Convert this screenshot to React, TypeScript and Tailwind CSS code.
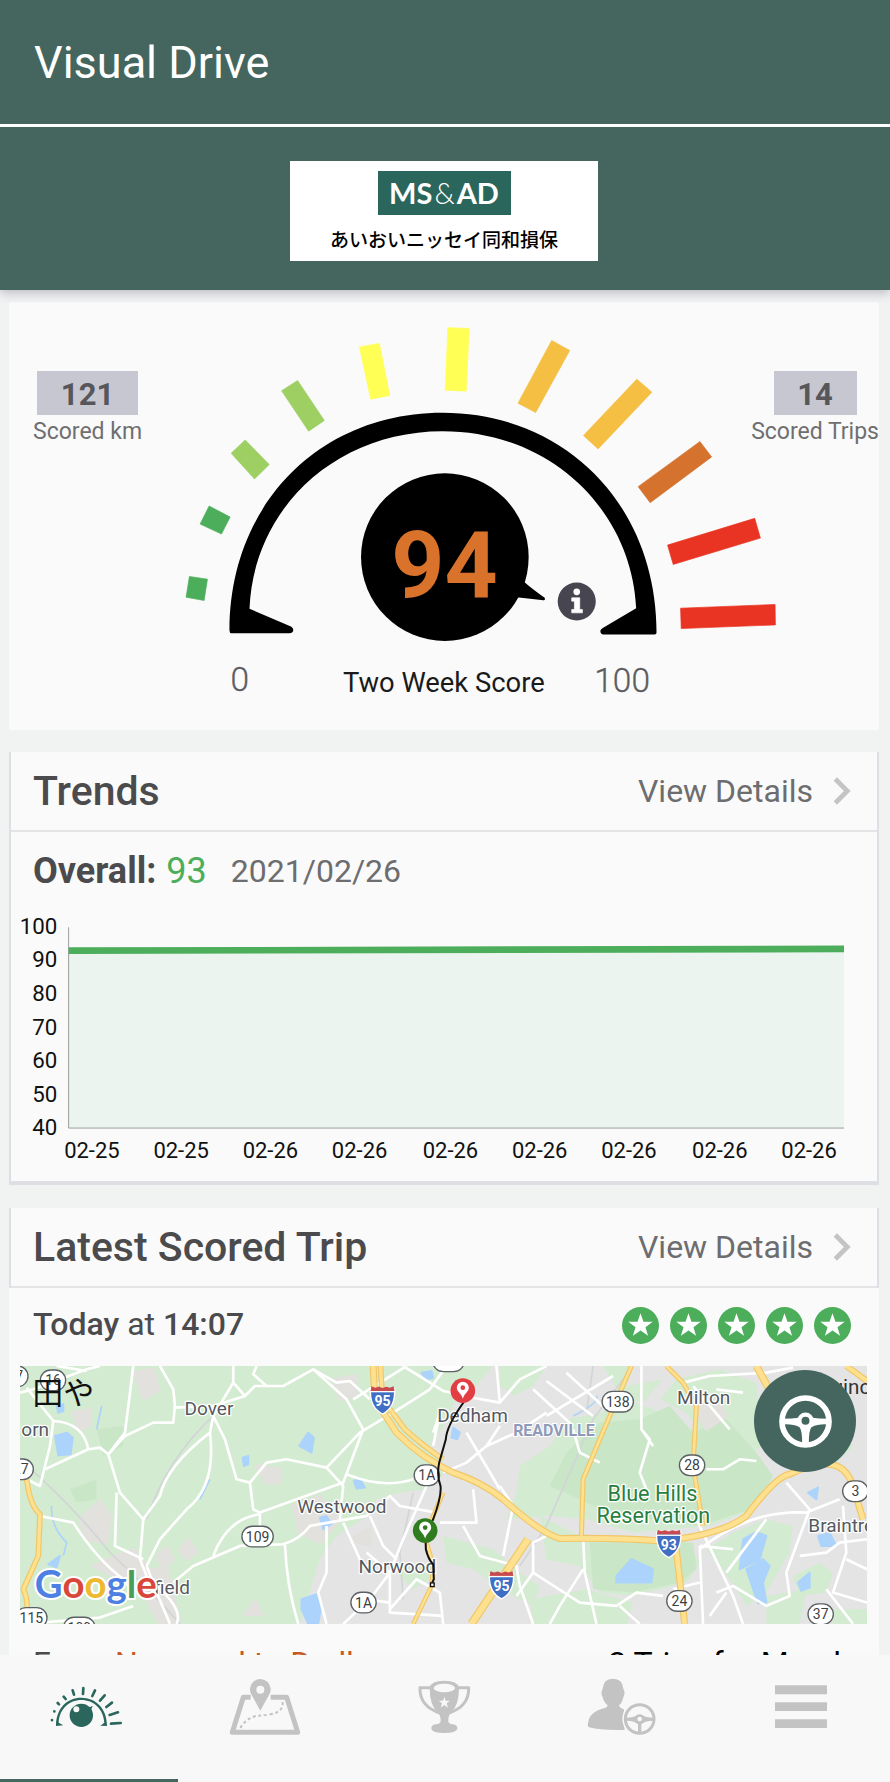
import React from "react";

const JP = "font-['Noto_Sans_CJK_JP',sans-serif]";

/* ---------- Gauge ---------- */

const gaugeBars: { points: string; fill: string }[] = [
  { points: "568,858 622,866 612,930 558,920", fill: "#4cad5b" },
  { points: "627,647 690,680 664,731 600,701", fill: "#4cad5b" },
  { points: "735,449 807,523 763,566 693,489", fill: "#9dcf62" },
  { points: "892,271 972,391 925,423 844,302", fill: "#9dcf62" },
  { points: "1077,171 1137,160 1168,316 1111,327", fill: "#ffff55" },
  { points: "1342,113 1406,115 1397,303 1334,300", fill: "#ffff55" },
  { points: "1653,151 1707,181 1605,367 1552,339", fill: "#f4bf42" },
  { points: "1908,267 1953,306 1792,476 1748,436", fill: "#f4bf42" },
  { points: "2097,454 2132,500 1948,637 1912,589", fill: "#d5722e" },
  { points: "2261,684 2278,743 2017,822 2000,764", fill: "#e93323" },
  { points: "2039,953 2322,942 2323,1003 2041,1014", fill: "#e93323" },
];

function Gauge() {
  return (
    <svg viewBox="426 36 1824 1281" className="block w-full overflow-visible font-[Roboto,sans-serif]" role="img" aria-label="Two Week Score 94">
      {gaugeBars.map((b) => (
        <polygon key={b.points} points={b.points} fill={b.fill} stroke={b.fill} strokeWidth="2" strokeLinejoin="round" />
      ))}
      <path
        d="M688 1020 C688 640 960 368 1326 368 C1700 368 1967 650 1967 1026 Q1967 1032 1961 1032 L1808 1032 Q1798 1030 1799 1020 Q1800 1015 1806 1012 L1906 953 C1892 660 1650 423 1326 423 C1010 423 760 650 748 955 L872 1008 Q880 1012 879 1020 Q877 1028 868 1028 L694 1028 Q688 1028 688 1020 Z"
        fill="#000"
      />
      <circle cx="1333" cy="800" r="251" fill="#000" />
      <path d="M1570 874 Q1595 896 1632 922 Q1635 930 1628 929 L1548 920 Z" fill="#000" />
      <text x="1332" y="919" textAnchor="middle" fontSize="278" fontWeight="700" fill="#d9722b">94</text>
      <circle cx="1728" cy="933" r="57" fill="#464550" />
      <circle cx="1728" cy="904" r="10" fill="#fff" />
      <path d="M1713 922 H1737 V957 H1745 V967 H1713 V957 H1721 V932 H1713 Z" fill="#fff" stroke="#fff" strokeWidth="2" />
      <text x="719" y="1202" textAnchor="middle" fontSize="100" fontWeight="300" fill="#5c5c60" stroke="#5c5c60">0</text>
      <text x="1330" y="1203" textAnchor="middle" fontSize="82" fill="#1a1a1a">Two Week Score</text>
      <text x="1864" y="1205" textAnchor="middle" fontSize="100" fontWeight="300" fill="#5c5c60" stroke="#5c5c60">100</text>
    </svg>
  );
}

function Stat({ value, label, wide }: { value: string; label: string; wide?: boolean }) {
  return (
    <div className="mt-[69px] flex flex-col items-center whitespace-nowrap">
      <span
        className={
          "flex h-11 items-center justify-center bg-[#c7c7d1] pt-1 text-[31px] font-bold text-[#57575b] " +
          (wide ? "w-[101px]" : "w-[83px]")
        }
      >
        {value}
      </span>
      <span className="text-[23px] leading-[34px] text-[#6f6f71]">{label}</span>
    </div>
  );
}

/* ---------- Trends chart ---------- */

const yTicks = [100, 90, 80, 70, 60, 50, 40];
const xTicks: { x: number; label: string }[] = [
  { x: 276, label: "02-25" },
  { x: 544, label: "02-25" },
  { x: 812, label: "02-26" },
  { x: 1080, label: "02-26" },
  { x: 1353, label: "02-26" },
  { x: 1621, label: "02-26" },
  { x: 1889, label: "02-26" },
  { x: 2162, label: "02-26" },
  { x: 2430, label: "02-26" },
];

function TrendChart() {
  return (
    <svg viewBox="33 540 2601 800" className="block w-full font-[Roboto,sans-serif]" role="img" aria-label="Overall score by date">
      <polygon points="206,662 2535,657 2535,1195 206,1195" fill="#ebf4ef" />
      <path d="M206 592 V1195 H2535" fill="none" stroke="#9a9f9d" strokeWidth="3" />
      <path d="M206 662 L2535 657" stroke="#4cad5b" strokeWidth="20" />
      {yTicks.map((t, i) => (
        <text key={t} x="172" y={611 + i * 101} textAnchor="end" fontSize="67" fill="#111">
          {t}
        </text>
      ))}
      {xTicks.map((t) => (
        <text key={t.x} x={t.x} y="1286" textAnchor="middle" fontSize="66" fill="#111">
          {t.label}
        </text>
      ))}
    </svg>
  );
}

/* ---------- Map ---------- */

function Shield({ x, y, n }: { x: number; y: number; n: string }) {
  return (
    <g transform={`translate(${x} ${y})`}>
      <path d="M-36 -34 L36 -34 Q40 22 0 42 Q-40 22 -36 -34 Z" fill="#3f6fc4" stroke="#fff" strokeWidth="4" />
      <path d="M-33 -41 L-22 -37 L-11 -40 L0 -36 L11 -40 L22 -37 L33 -41 L36 -27 L-36 -27 Z" fill="#c94a4e" />
      <path d="M-37 -25 H37" stroke="#fff" strokeWidth="4" />
      <text y="18" textAnchor="middle" fontSize="42" fontWeight="700" fill="#fff">{n}</text>
    </g>
  );
}

function Route({ x, y, n }: { x: number; y: number; n: string }) {
  const w = n.length > 2 ? 94 : 76;
  return (
    <g transform={`translate(${x} ${y})`}>
      <rect x={-w / 2} y="-31" width={w} height="62" rx="31" fill="#fff" stroke="#5b6064" strokeWidth="4" />
      <text y="15" textAnchor="middle" fontSize="42" fill="#3c4043">{n}</text>
    </g>
  );
}

function Place({ x, y, name }: { x: number; y: number; name: string }) {
  return (
    <text x={x} y={y} fontSize="57" fill="#55595e" stroke="#fff" strokeWidth="8" strokeLinejoin="round" paintOrder="stroke">
      {name}
    </text>
  );
}

function Pin({ x, y, fill }: { x: number; y: number; fill: string }) {
  return (
    <g transform={`translate(${x} ${y})`}>
      <circle r="37" fill={fill} />
      <path d="M0 24 C-4 8 -18 3 -18 -9 A18 18 0 0 1 18 -9 C18 3 4 8 0 24 Z" fill="#fff" />
      <circle cy="-9" r="7" fill={fill} />
    </g>
  );
}

const greens = [
  "M60 500 H1480 L1430 560 L1370 600 L1330 680 L1290 740 L1340 820 L1280 870 L1200 880 L1130 900 L1090 960 L1010 1010 L960 1080 L900 1274 H60 Z",
  "M1500 500 H1640 L1600 560 L1540 590 L1500 560 Z",
  "M1810 500 L1900 500 L1880 560 L1990 540 L1930 610 L1870 600 Z",
  "M1980 600 L2030 540 L2160 510 L2270 550 L2280 650 L2320 720 L2240 770 L2100 700 L2060 640 Z",
  "M1560 800 L1650 740 L1700 660 L1810 640 L1850 590 L1960 630 L2060 690 L2150 680 L2240 780 L2320 840 L2260 930 L2130 980 L1900 1000 L1760 960 L1640 950 L1520 960 L1550 880 Z",
  "M1620 950 L1760 1020 L1860 1030 L2060 1020 L2100 1090 L2060 1150 L1900 1190 L1800 1180 L1740 1100 L1640 1080 Z",
  "M1330 1010 L1480 1050 L1560 1120 L1620 1160 L1600 1220 L1520 1180 L1420 1110 L1340 1090 Z",
  "M2120 1050 L2200 1000 L2300 960 L2380 980 L2370 1060 L2300 1180 L2240 1220 L2190 1140 Z",
  "M2380 1130 L2460 1090 L2500 1120 L2480 1180 L2400 1190 Z",
  "M2440 700 L2520 690 L2560 740 L2510 790 Z",
  "M1590 1200 L1760 1170 L1900 1210 L1880 1274 H1600 Z",
  "M2300 1190 L2420 1170 L2400 1274 H2300 Z",
  "M2490 1230 H2602 V1274 H2500 Z",
  "M1190 1120 L1260 1090 L1300 1130 L1240 1170 Z",
];

const darkGreens = [
  "M1650 860 L1700 760 L1800 670 L1920 660 L2010 620 L2080 700 L2180 660 L2270 760 L2320 830 L2250 930 L2100 980 L1960 960 L1860 960 L1760 910 Z",
  "M1770 1030 H2080 L2090 1110 L2040 1150 L1900 1180 L1780 1170 Z",
  "M290 690 L370 680 L370 740 L310 770 Z",
  "M210 870 L290 840 L290 900 L230 910 Z",
];

const patches = [
  "M405 520 L460 510 L475 570 L430 600 Z",
  "M1000 540 L1070 530 L1070 590 L1020 600 Z",
  "M220 640 L270 630 L270 680 L235 690 Z",
  "M240 960 L300 905 L330 950 L320 1030 L260 1020 Z",
  "M770 800 L840 810 L840 850 L800 850 Z",
  "M470 1070 L500 1045 L520 1080 L490 1110 Z",
  "M540 1050 L565 1020 L590 1060 L560 1080 Z",
  "M735 1245 L765 1205 L785 1245 Z",
  "M880 920 L960 890 L1020 960 L960 1030 L900 1000 Z",
  "M400 1110 L500 1110 L540 1274 H480 L440 1200 Z",
  "M1050 1020 L1110 990 L1110 1040 Z",
  "M280 1100 L400 1050 L440 1100 L360 1140 Z",
  "M2080 620 L2150 590 L2180 650 L2120 690 Z",
];

const waters = [
  "M165 710 L200 700 L218 715 L212 765 L175 768 Z",
  "M898 740 L925 700 L942 715 L935 760 Z",
  "M728 775 L745 770 L745 795 L732 800 Z",
  "M1062 845 L1080 838 L1095 865 L1070 868 Z",
  "M960 955 L980 950 L995 975 L970 990 Z",
  "M905 1200 L950 1185 L965 1215 L955 1274 L925 1274 L905 1230 Z",
  "M145 1095 L180 1070 L170 1105 Z",
  "M170 620 L190 615 L190 635 L175 640 Z",
  "M1265 520 L1295 515 L1300 535 L1280 540 Z",
  "M1360 685 L1380 700 L1372 720 L1355 715 Z",
  "M1850 1130 L1895 1080 L1960 1110 L1955 1150 L1850 1150 Z",
  "M2230 1020 L2270 998 L2300 1010 L2280 1080 L2220 1110 Z",
  "M2240 1110 L2290 1080 L2310 1100 L2290 1150 L2300 1210 L2275 1212 L2250 1140 Z",
  "M2395 1150 L2430 1120 L2430 1165 L2405 1175 Z",
  "M2455 1010 L2490 1000 L2510 1040 L2465 1040 Z",
  "M2425 880 L2455 865 L2450 900 Z",
];

const whiteRoads = [
  "M80 565 L160 665 L150 740 L135 800 L120 860 L60 830",
  "M160 665 Q250 670 265 750 L135 810",
  "M400 500 L375 700 L325 765 L360 880 L430 960 L420 1080 L440 1130",
  "M265 750 L300 745 L325 765 L375 710 L460 670 L520 670 L525 620 L520 570 L480 500",
  "M520 625 L640 620 L735 590 L765 560 L850 560 L940 510 L1010 550 L1050 545 L1110 600",
  "M700 500 L700 550 L735 590 M770 500 L760 525 L800 560",
  "M700 550 L640 650 L630 700 Q500 800 480 890 L430 960",
  "M640 650 L675 720 L710 840 L750 850 L800 790 L860 780 L980 805 L1080 700 L1180 640 L1290 570 L1340 500",
  "M630 700 Q650 860 560 930 L480 1020 L440 1100",
  "M750 850 L760 930 L780 940 L1030 850 L1090 690 L1040 600 L940 510",
  "M350 880 L345 1040 L430 1080",
  "M120 950 L220 970 Q290 1080 370 1140 L400 1180",
  "M440 1100 L470 1180 L510 1274 M470 1160 Q550 1230 530 1274",
  "M520 1150 L580 1100 L720 1040 L850 1035 Q900 1020 930 980 L1100 950 L1170 890 L1200 920 L1310 940",
  "M640 1070 Q680 960 780 945 V1000",
  "M855 1035 Q860 1160 895 1274",
  "M980 980 V1120 L955 1180 L980 1274",
  "M1030 970 L1080 1080 M1110 950 L1150 1040 L1190 1080",
  "M1040 825 Q1150 870 1240 840 M980 805 L1030 860 L1020 960",
  "M1280 860 L1210 1020 L1170 1120 L1170 1240 L1330 1250",
  "M1100 1060 L1170 1120 L1110 1200 L1030 1274 M1100 1200 L1170 1210 M1170 1230 L1250 1140 L1320 1180 L1330 1274",
  "M1060 600 L1220 500 M1210 500 L1330 575 L1400 590",
  "M1390 590 L1500 610 L1560 540 L1640 500 M1490 500 L1500 610",
  "M1640 545 L1780 650 M1600 570 L1720 680 M1640 650 L1840 530 M1700 520 L1820 630",
  "M1330 820 L1400 790 L1460 740 L1550 700 L1640 640 M1400 700 L1500 870 M1460 740 L1500 680",
  "M1320 970 L1430 970 L1420 870 M1500 860 L1540 920 L1510 1070",
  "M1390 980 L1440 1070 L1550 1100 L1560 1160 L1600 1274",
  "M1640 1010 L1600 1030 L1600 1120 L1550 1190 M1600 1120 L1740 1210 L1850 1220 L1910 1180 L1990 1190",
  "M1750 1010 L1755 1120 L1790 1274 M1750 1110 L1680 1220 L1650 1274 M1860 1220 L1920 1274",
  "M1925 500 V690 L1950 720 L1920 820 L1940 870 M1925 690 L1960 740",
  "M2050 550 L2130 530 L2300 520 L2380 505 M2080 560 L2190 690 M2230 580 L2150 570",
  "M2120 810 L2170 810 L2220 780 L2270 785",
  "M2090 960 L2200 1190 L2230 1274 M2100 1040 L2110 1274 M2100 1040 L2200 1050",
  "M2150 1180 L2200 1160 L2300 1220 L2370 1190 L2360 1120 L2430 930 L2360 850",
  "M2100 1050 Q2250 930 2420 940 L2520 900 M2180 1120 L2300 960",
  "M2400 1070 L2480 1060 L2520 1030 L2602 1020 M2530 920 L2540 1060 L2500 1180 L2602 1210",
  "M2540 1080 L2602 1110 M2480 1170 L2560 1274 M2020 1170 L2100 1150",
  "M2130 1250 L2180 1180 M1300 740 L1320 640 L1300 700",
  "M1800 790 L1740 760 L1720 690",
  "M80 1274 L300 1255 L400 1220",
  "M60 580 L100 570 L260 510 L300 500 M170 500 L260 515",
];

const yellowRoads: { d: string; w: number }[] = [
  { d: "M80 840 Q90 920 120 945 L115 1070 L70 1170 Q90 1210 75 1274", w: 12 },
  { d: "M1895 500 L1800 720 L1750 840 L1745 1010", w: 10 },
  { d: "M2000 500 L2050 550 L2090 620 L2080 800 L2110 980", w: 10 },
  { d: "M2270 500 L2320 590", w: 18 },
  { d: "M2540 500 L2602 545", w: 14 },
  { d: "M2490 795 Q2540 800 2560 860 L2590 960", w: 16 },
  { d: "M1330 880 L1275 1010 L1300 1100 L1295 1160 L1240 1274", w: 9 },
  { d: "M1585 1020 L1415 1274", w: 20 },
  { d: "M2025 1010 L2055 1274", w: 16 },
  { d: "M1120 500 L1125 600 L1190 700 Q1270 780 1360 820 Q1450 850 1510 900 Q1620 1000 1680 1018 Q1860 1015 1980 1025 Q2160 1010 2240 950 Q2330 830 2370 825 Q2440 790 2490 795", w: 16 },
  { d: "M1142 500 L1148 600 L1215 690 Q1270 740 1330 780", w: 12 },
];

function TripMap() {
  return (
    <svg viewBox="60 500 2542 774" className="block w-full font-[Roboto,sans-serif]" role="img" aria-label="Trip route from Norwood to Dedham">
      <rect x="60" y="500" width="2542" height="774" fill="#e5e4e5" />
      {greens.map((d) => <path key={d} d={d} fill="#d3ebd0" />)}
      {darkGreens.map((d) => <path key={d} d={d} fill="#c9e6c7" />)}
      {patches.map((d) => <path key={d} d={d} fill="#e2e1dd" stroke="#e2e1dd" strokeWidth="10" strokeLinejoin="round" />)}
      {waters.map((d) => <path key={d} d={d} fill="#abd3fb" stroke="#abd3fb" strokeWidth="6" strokeLinejoin="round" />)}
      <g fill="none" strokeLinejoin="round">
        <path d="M305 620 L290 690 M155 920 Q150 980 200 1030 L190 1070 M630 840 L600 900 M1720 650 Q1800 610 1790 590" stroke="#abd3fb" strokeWidth="5" />
        <path d="M60 780 Q220 920 330 1060 Q430 1150 540 1274 M640 650 Q500 780 440 960 M1240 880 L1200 1060 L1210 1200 M1900 500 L1780 660 L1640 980 L1560 1100 M1780 500 L1760 640" stroke="#d2d5d6" strokeWidth="5" />
        {whiteRoads.map((d) => <path key={d} d={d} stroke="#fff" strokeWidth="8" />)}
        {yellowRoads.map((r) => <path key={r.d} d={r.d} stroke="#f1c668" strokeWidth={r.w + 5} />)}
        {yellowRoads.map((r) => <path key={r.d} d={r.d} stroke="#fde18f" strokeWidth={r.w - 2} />)}
      </g>

      <Route x={46} y={531} n="27" />
      <Route x={159} y={543} n="16" />
      <Route x={62} y={810} n="27" />
      <Route x={94} y={1256} n="115" />
      <Route x={238} y={1285} n="109" />
      <Route x={773} y={1012} n="109" />
      <Route x={1091} y={1210} n="1A" />
      <Route x={1281} y={828} n="1A" />
      <Route x={1346} y={486} n="109" />
      <Route x={1854} y={607} n="138" />
      <Route x={2077} y={798} n="28" />
      <Route x={2039} y={1205} n="24" />
      <Route x={2567} y={876} n="3" />
      <Route x={2463} y={1245} n="37" />
      <Shield x={1148} y={602} n="95" />
      <Shield x={1505} y={1157} n="95" />
      <Shield x={2007} y={1033} n="93" />

      <Place x={554} y={646} name="Dover" />
      <Place x={64} y={710} name="orn" />
      <Place x={892} y={940} name="Westwood" />
      <Place x={1076} y={1121} name="Norwood" />
      <Place x={1312} y={667} name="Dedham" />
      <Place x={2032} y={614} name="Milton" />
      <Place x={2426} y={998} name="Braintree" />
      <Place x={462} y={1185} name="field" />
      <text x="2496" y="584" fontSize="62" fill="#333">uincy</text>
      <text x="1540" y="710" fontSize="48" fontWeight="700" fill="#8d9bb8" stroke="#fff" strokeWidth="6" paintOrder="stroke">READVILLE</text>
      <g fontSize="65" fill="#2a7f3f" stroke="#fff" strokeWidth="8" strokeLinejoin="round" paintOrder="stroke" textAnchor="middle">
        <text x="1958" y="905">Blue Hills</text>
        <text x="1961" y="970">Reservation</text>
      </g>

      <path d="M1392 608 Q1340 680 1338 720 L1318 790 Q1310 830 1322 860 Q1326 890 1300 960 L1277 1000 L1278 1050 Q1285 1080 1300 1095 L1302 1140 L1297 1150" fill="none" stroke="#111" strokeWidth="6" />
      <rect x="1292" y="1151" width="11" height="11" fill="#fff" stroke="#111" strokeWidth="4" />
      <Pin x={1389} y={574} fill="#e23f44" />
      <Pin x={1276} y={994} fill="#2f7d1f" />

      <text x="104" y="1195" fontSize="115" fontWeight="700" stroke="#fff" strokeWidth="12" strokeLinejoin="round" paintOrder="stroke" className="font-[Lato,sans-serif]">
        <tspan fill="#4e80e4">G</tspan><tspan fill="#d9473a">o</tspan><tspan fill="#efb92f">o</tspan><tspan fill="#4e80e4">g</tspan><tspan fill="#4a9d58">l</tspan><tspan fill="#d9473a">e</tspan>
      </text>
      <text x="97" y="615" fontSize="93" fill="#111" className="font-['Noto_Sans_CJK_JP',sans-serif]">田や</text>
    </svg>
  );
}

/* ---------- Icons ---------- */

function StarBadge() {
  return (
    <svg viewBox="0 0 112 112" className="size-[37px]" aria-hidden="true">
      <circle cx="56" cy="56" r="56" fill="#4cad5b" />
      <path d="M56 19 L65 45 L93 45 L71 61 L79 87 L56 71 L33 87 L41 61 L19 45 L47 45 Z" fill="#fff" />
    </svg>
  );
}

function Chevron() {
  return (
    <svg viewBox="0 0 54 84" className="h-[28px] w-[18px]" aria-hidden="true">
      <path d="M7 6 L43 42 L7 78" fill="none" stroke="#c4c4c4" strokeWidth="14" />
    </svg>
  );
}

function WheelIcon() {
  return (
    <svg viewBox="0 0 160 160" className="size-[53px]" fill="none" stroke="#fff" aria-hidden="true">
      <circle cx="80" cy="80" r="71" strokeWidth="17" />
      <path d="M12 72 Q40 72 60 69 L100 69 Q120 72 148 72 L148 89 Q118 87 98 97 Q90 105 90 148 L70 148 Q70 105 62 97 Q42 87 12 89 Z" fill="#fff" stroke="none" />
      <circle cx="80" cy="78" r="25" fill="#fff" stroke="none" />
      <circle cx="80" cy="78" r="12" fill="#44665f" stroke="none" />
    </svg>
  );
}

const iconClass = "h-[60px] w-20";

function EyeIcon() {
  return (
    <svg viewBox="147 105 240 180" className={iconClass} aria-hidden="true">
      <g fill="none" stroke="#2a665b" strokeWidth="8" strokeLinecap="round">
        <path d="M156 240 v.5 M163 214 v.5 M173 189 l4 4 M191 170 l6 7 M218 151 l4 13 M250 144 l-1 18 M285 151 l-8 17 M314 166 l-14 16 M336 188 l-17 13 M354 217 l-25 8 M362 249 l-29 2" />
      </g>
      <path d="M168 258 C168 205 201 173 244 173 C288 173 321 206 321 258 L301 257 L313 248 C310 207 281 180 244 180 C208 180 178 207 176 248 L190 256 Z" fill="#2a665b" />
      <circle cx="244" cy="226" r="35" fill="#2a665b" />
      <path d="M266 203 L278 197 L273 211 Z" fill="#2a665b" />
      <circle cx="229" cy="208" r="9" fill="#f8f8f8" />
    </svg>
  );
}

function MapIcon() {
  return (
    <svg viewBox="681 105 240 180" className={iconClass} aria-hidden="true">
      <path d="M752 172 H730 L697 277 H893 L860 172 H812" fill="none" stroke="#c3c3c3" strokeWidth="15" strokeLinejoin="round" />
      <path d="M781 212 L755 165 A31 31 0 1 1 807 165 Z" fill="#c3c3c3" />
      <circle cx="781" cy="149" r="12" fill="#f8f8f8" />
      <path d="M848 186 Q850 215 815 222 Q790 227 770 227 Q735 237 720 266" fill="none" stroke="#c3c3c3" strokeWidth="6" strokeDasharray="9 8" />
    </svg>
  );
}

function TrophyIcon() {
  return (
    <svg viewBox="1215 105 240 180" className={iconClass} aria-hidden="true">
      <path d="M1294 143 L1260 143 Q1258 200 1322 220 M1372 143 L1406 143 Q1408 200 1344 220" fill="none" stroke="#c3c3c3" strokeWidth="9" strokeLinejoin="round" />
      <path d="M1289 143 Q1293 122 1333 122 Q1373 122 1377 143 Q1377 195 1354 216 Q1344 226 1345 245 Q1349 253 1361 253 Q1373 257 1372 266 Q1368 279 1333 279 Q1298 279 1294 266 Q1293 257 1305 253 Q1317 253 1322 245 Q1323 226 1312 216 Q1289 195 1289 143 Z" fill="#c3c3c3" />
      <ellipse cx="1333" cy="144" rx="32" ry="13" fill="#f8f8f8" />
      <path d="M1333 170 L1337 182 L1350 182 L1340 190 L1344 203 L1333 195 L1322 203 L1326 190 L1316 182 L1329 182 Z" fill="#f8f8f8" />
    </svg>
  );
}

function DriverIcon() {
  return (
    <svg viewBox="429 105 240 180" className={iconClass} aria-hidden="true">
      <path d="M519 116 Q548 116 550 146 Q557 158 550 172 Q546 190 537 196 Q538 204 552 208 Q548 240 554 270 Q485 272 447 262 Q442 260 444 250 Q448 215 492 205 Q502 203 503 196 Q492 188 488 172 Q481 158 488 146 Q490 116 519 116 Z" fill="#c3c3c3" />
      <circle cx="599" cy="237" r="52" fill="#f8f8f8" />
      <circle cx="599" cy="237" r="43" fill="none" stroke="#c3c3c3" strokeWidth="9" />
      <path d="M558 233 Q582 233 590 226 H608 Q616 233 640 233 V242 Q612 243 604 253 V278 H594 V253 Q586 243 558 242 Z" fill="#c3c3c3" />
      <circle cx="599" cy="237" r="14" fill="#c3c3c3" />
      <circle cx="599" cy="237" r="7" fill="#f8f8f8" />
    </svg>
  );
}

function MenuIcon() {
  return (
    <svg viewBox="963 105 240 180" className={iconClass} aria-hidden="true">
      <path d="M1005 136 h156 v27 h-156 Z M1005 187 h156 v26 h-156 Z M1005 238 h156 v26 h-156 Z" fill="#c3c3c3" />
    </svg>
  );
}

/* ---------- Page ---------- */

function CardHeader({ title }: { title: string }) {
  return (
    <div className="flex h-20 items-center justify-between border-b-2 border-[#e4e4e6] pr-[26px] pl-[22px]">
      <h2 className="pt-0.5 text-[41px] font-medium text-[#4b4b4d]">{title}</h2>
      <a href="#details" className="flex items-center gap-5 text-[32px] text-[#6d6d6f]">
        View Details
        <Chevron />
      </a>
    </div>
  );
}

const tabs = [
  { label: "Home", icon: <EyeIcon /> },
  { label: "Trips", icon: <MapIcon /> },
  { label: "Rewards", icon: <TrophyIcon /> },
  { label: "Driver", icon: <DriverIcon /> },
  { label: "Menu", icon: <MenuIcon /> },
];

export default function App() {
  return (
    <div className="flex h-screen flex-col bg-[#f1f3f3] font-[Roboto,sans-serif]">
      <header className="relative shrink-0 bg-[#44665f] shadow-[0_3px_10px_rgba(60,60,80,0.3)]">
        <h1 className="flex h-[127px] items-center border-b-3 border-white px-[34px] pt-0.5 text-[45px] text-white">Visual Drive</h1>
        <div className="flex h-[163px] items-center justify-center pt-1 pr-0.5">
          <div className="flex h-[100px] w-[308px] flex-col items-center bg-white pt-2.5">
            <span className="flex h-11 w-[133px] items-center justify-center gap-0.5 bg-[#2a665b] text-[29px] font-bold text-white font-[Lato,sans-serif]">
              MS<span className="font-light">&amp;</span>AD
            </span>
            <span className={`${JP} pt-2.5 text-[19px] leading-7 font-medium whitespace-nowrap text-black`}>あいおいニッセイ同和損保</span>
          </div>
        </div>
      </header>

      <main className="min-h-0 flex-1 overflow-y-auto pr-[11px] pl-[9px] [scrollbar-width:none]">
        <section className="mt-3 mb-[22px] grid grid-cols-[auto_1fr_auto] bg-[#fafafa] pl-6">
          <Stat value="121" label="Scored km" wide />
          <Gauge />
          <Stat value="14" label="Scored Trips" />
        </section>

        <section className="mb-[23px] border-x-2 border-b-4 border-[#dedfe4] bg-[#fafafa]">
          <CardHeader title="Trends" />
          <div className="flex h-[78px] items-center pl-[22px] text-[#6d6d6f]">
            <span className="text-4xl font-bold text-[#4b4b4d]">Overall:</span>
            <span className="pl-2.5 text-4xl text-[#4cad5b]">93</span>
            <span className="pl-6 text-[32px]">2021/02/26</span>
          </div>
          <TrendChart />
          <div className="h-[5px]" />
        </section>

        <section className="bg-[#fafafa]">
          <div className="border-x-2 border-[#dedfe4]">
            <CardHeader title="Latest Scored Trip" />
          </div>
          <div className="flex h-[78px] items-center justify-between pr-7 pb-1 pl-6">
            <p className="pb-0.5 text-[32px] text-[#4b4b4d]">
              <span className="font-medium">Today</span> at <span className="font-medium">14:07</span>
            </p>
            <div className="flex gap-[11px]" role="img" aria-label="5 stars">
              <StarBadge />
              <StarBadge />
              <StarBadge />
              <StarBadge />
              <StarBadge />
            </div>
          </div>
          <div className="relative mr-3 ml-[11px]">
            <TripMap />
            <button
              type="button"
              aria-label="Start driving"
              className="absolute top-1 right-[11px] flex size-[102px] items-center justify-center rounded-full bg-[#44665f]"
            >
              <WheelIcon />
            </button>
          </div>
          <div className="flex justify-between pt-[19px] pr-7 pb-6 pl-6 text-[32px] leading-10">
            <p className="text-[#4b4b4d]">
              From <span className="text-[#c8591f]">Norwood to Dedham</span>
            </p>
            <p className="text-black">2 Trips for March</p>
          </div>
        </section>
      </main>

      <nav className="relative grid h-[127px] shrink-0 grid-cols-5 bg-[#f8f8f8]">
        {tabs.map((t, i) => (
          <button key={t.label} type="button" aria-label={t.label} className="flex flex-col items-center justify-between pt-5">
            {t.icon}
            <span className={i === 0 ? "h-[3px] w-full bg-[#44665f]" : "h-[3px] w-full"} />
          </button>
        ))}
      </nav>
    </div>
  );
}
